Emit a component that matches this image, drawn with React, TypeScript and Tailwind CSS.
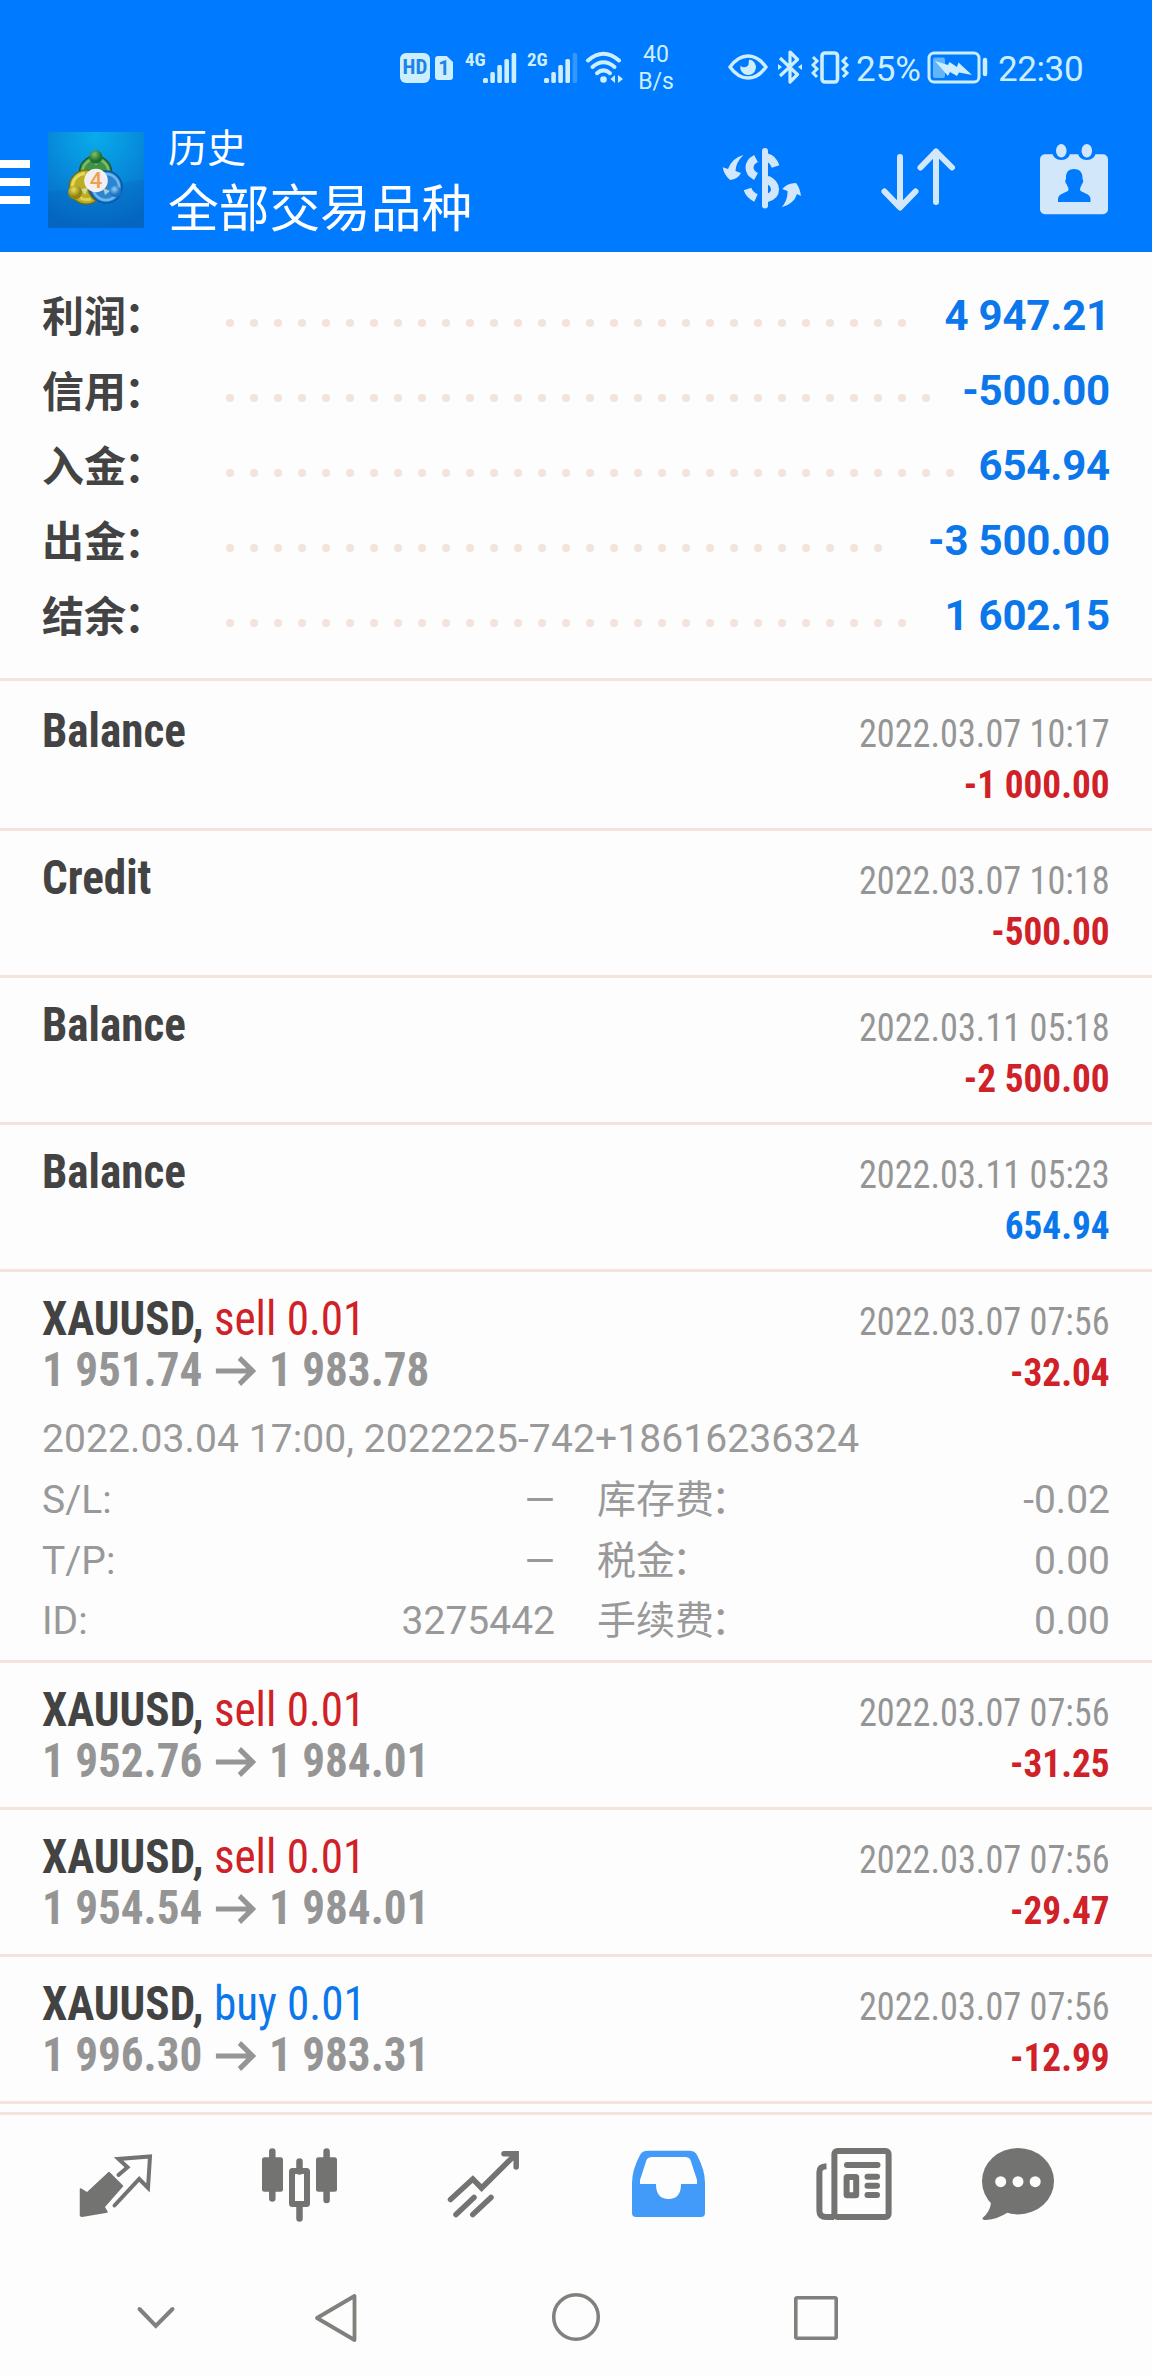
import clsx from 'clsx'

type Tone = 'red' | 'blue'

const TONE_MAP: Record<Tone, string> = {
  red: 'text-[#cf2127]',
  blue: 'text-[#0b77ea]',
}

const SUMMARY = [
  { label: '利润', value: '4 947.21', dots: 29 },
  { label: '信用', value: '-500.00', dots: 30 },
  { label: '入金', value: '654.94', dots: 31 },
  { label: '出金', value: '-3 500.00', dots: 28 },
  { label: '结余', value: '1 602.15', dots: 29 },
]

interface Deal {
  title: string
  side?: string
  sideTone?: Tone
  from?: string
  to?: string
  time: string
  amount: string
  tone: Tone
  expanded?: boolean
}

const DEALS: Deal[] = [
  { title: 'Balance', time: '2022.03.07 10:17', amount: '-1 000.00', tone: 'red' },
  { title: 'Credit', time: '2022.03.07 10:18', amount: '-500.00', tone: 'red' },
  { title: 'Balance', time: '2022.03.11 05:18', amount: '-2 500.00', tone: 'red' },
  { title: 'Balance', time: '2022.03.11 05:23', amount: '654.94', tone: 'blue' },
  {
    title: 'XAUUSD,',
    side: 'sell 0.01',
    sideTone: 'red',
    from: '1 951.74',
    to: '1 983.78',
    time: '2022.03.07 07:56',
    amount: '-32.04',
    tone: 'red',
    expanded: true,
  },
  {
    title: 'XAUUSD,',
    side: 'sell 0.01',
    sideTone: 'red',
    from: '1 952.76',
    to: '1 984.01',
    time: '2022.03.07 07:56',
    amount: '-31.25',
    tone: 'red',
  },
  {
    title: 'XAUUSD,',
    side: 'sell 0.01',
    sideTone: 'red',
    from: '1 954.54',
    to: '1 984.01',
    time: '2022.03.07 07:56',
    amount: '-29.47',
    tone: 'red',
  },
  {
    title: 'XAUUSD,',
    side: 'buy 0.01',
    sideTone: 'blue',
    from: '1 996.30',
    to: '1 983.31',
    time: '2022.03.07 07:56',
    amount: '-12.99',
    tone: 'red',
  },
]

const DETAILS = [
  ['S/L:', '—', '库存费', '-0.02'],
  ['T/P:', '—', '税金', '0.00'],
  ['ID:', '3275442', '手续费', '0.00'],
]

const SignalBars = ({ weak = false }: { weak?: boolean }) => (
  <svg width="36" height="34" viewBox="0 0 36 34" fill="currentColor">
    <rect x="1" y="28" width="5" height="5" rx="1.5" />
    <rect x="8.3" y="22" width="4.6" height="11" rx="1.5" />
    <rect x="15.3" y="15" width="4.6" height="18" rx="1.5" />
    <rect x="22.4" y="9" width="4.6" height="24" rx="1.5" />
    <rect x="29.6" y="3" width="4.6" height="30" rx="1.5" opacity={weak ? 0.25 : 1} />
  </svg>
)

const StatusBar = () => (
  <div className="flex h-[110px] items-start pl-[400px] pt-[50px] text-[#cdeefd]">
    <div className="mt-[3px] flex h-[30px] w-[30px] items-center justify-center rounded-[6px] bg-[#cdeefd] text-[21px] font-bold text-[#1c84e8] [font-stretch:75%]">
      HD
    </div>
    <div className="ml-[5px] mt-[6px] flex h-6 w-[18px] items-center justify-center rounded-[3px] bg-[#cdeefd] text-[20px] font-bold text-[#1c84e8] [clip-path:polygon(0_0,65%_0,100%_25%,100%_100%,0_100%)]">
      1
    </div>
    <span className="ml-[12px] mt-0 w-[17px] text-[19px] leading-[19px] font-bold [font-stretch:75%]">4G</span>
    <SignalBars />
    <span className="ml-[9px] mt-0 w-[16px] text-[19px] leading-[19px] font-bold [font-stretch:75%]">2G</span>
    <SignalBars weak />
    <svg className="ml-[6px]" width="40" height="34" viewBox="0 0 40 34" fill="none" stroke="currentColor" strokeWidth="4" strokeLinecap="round">
      <path d="M3 10.5Q18.500-3 34 10.500" />
      <path d="M7.500 17Q18.500 7.500 29.500 17" />
      <path d="M12 23.200Q18.500 17.500 25 23.200" />
      <circle cx="18.500" cy="29.500" r="3.300" fill="currentColor" stroke="none" />
      <path d="M30 25v8l-4.500-4zM33 25v8l5-4z" fill="currentColor" stroke="none" />
    </svg>
    <div className="-mt-[9px] ml-[11px] w-[40px] text-center text-[23px] leading-[27px]">
      40
      <br />
      B/s
    </div>
    <svg className="ml-[51px]" width="42" height="34" viewBox="0 0 42 34" fill="none" stroke="currentColor" strokeWidth="3.500">
      <path d="M3 17Q11 6 21 6T39 17Q31 28 21 28T3 17Z" strokeLinejoin="round" />
      <path d="M22.500 9.500a7.800 7.800 0 1 1-9 6c2 3 7 2 8-1 .5-2-.2-4 1-5z" fill="currentColor" stroke="none" />
    </svg>
    <svg className="ml-[8px]" width="28" height="34" viewBox="0 0 28 34" fill="none" stroke="currentColor" strokeWidth="3.200" strokeLinejoin="round">
      <path d="M3 8 20.500 24.500 13 32V2l7.500 7.500L3 26" />
      <path d="M1 14v6l4-3zM25 14v6l-4-3z" fill="currentColor" stroke="none" />
    </svg>
    <svg className="ml-[6px]" width="40" height="34" viewBox="0 0 40 34" fill="none" stroke="currentColor">
      <rect x="11" y="3" width="15.500" height="29" rx="3" strokeWidth="3.600" />
      <path d="m2 7 4 4-4 4 4 4-4 4 4 4M36 7l-4 4 4 4-4 4 4 4-4 4" strokeWidth="3" />
    </svg>
    <span className="ml-[5px] w-[71px] text-[35px] leading-[40px]">25%</span>
    <svg width="64" height="34" viewBox="0 0 64 34" fill="none">
      <rect x="2" y="3" width="50" height="29" rx="5" stroke="currentColor" strokeWidth="3" />
      <rect x="6" y="7.500" width="12" height="20.500" rx="2" fill="#62b4fb" />
      <path d="M8 11 21 15 22.500 12 30 17 31.500 12.500 45 25 32 22.500 30 26 23 22 21 26Z" fill="currentColor" />
      <path d="M58 10v14" stroke="currentColor" strokeWidth="4.500" strokeLinecap="round" />
    </svg>
    <span className="ml-[7px] text-[35px] leading-[40px] tracking-[-0.4px]">22:30</span>
  </div>
)

const Logo = () => (
  <svg width="96" height="96" viewBox="0 0 96 96">
    <defs>
      <radialGradient id="sky" cx="50%" cy="5%" r="95%">
        <stop offset="0" stopColor="#08aceb" />
        <stop offset="0.550" stopColor="#0787d8" />
        <stop offset="1" stopColor="#0568c4" />
      </radialGradient>
      <radialGradient id="green" cx="40%" cy="30%">
        <stop offset="0" stopColor="#7cc26a" />
        <stop offset="1" stopColor="#1f7030" />
      </radialGradient>
      <radialGradient id="yellow" cx="40%" cy="30%">
        <stop offset="0" stopColor="#ece05a" />
        <stop offset="1" stopColor="#8f8412" />
      </radialGradient>
      <radialGradient id="azure" cx="40%" cy="30%">
        <stop offset="0" stopColor="#8dd0fa" />
        <stop offset="1" stopColor="#1c72c4" />
      </radialGradient>
    </defs>
    <rect width="96" height="96" rx="2" fill="url(#sky)" />
    <path d="M0 60 96 48V96H0Z" fill="#0560b8" opacity="0.250" />
    <circle cx="47.500" cy="40" r="16" fill="#3f9246" stroke="#1b5b33" strokeWidth="1.500" />
    <circle cx="47.500" cy="40" r="13" fill="none" stroke="#79bd68" strokeWidth="2.500" />
    <circle cx="58" cy="55" r="16" fill="#2b85d3" stroke="#0f559f" strokeWidth="1.500" />
    <circle cx="58" cy="55" r="13" fill="none" stroke="#6db9ef" strokeWidth="2.500" />
    <path d="M42 38.500A17 17 0 1 0 48 69Q39 62 40 54Z" fill="#b9ae25" stroke="#6d6a18" strokeWidth="1.200" />
    <path d="M37 41.500A13 13 0 0 0 24.500 54" fill="none" stroke="#e6da58" strokeWidth="3" />
    <path d="M30 64Q35 69 43 67" fill="none" stroke="#e0d14c" strokeWidth="3" />
    <path d="M48 33 43 28.500H53ZM33 57 37 63 40 56ZM62 59 57 63 55 56Z" fill="#d9eecb" opacity="0.700" />
    <circle cx="47.800" cy="25" r="6.700" fill="url(#green)" />
    <circle cx="27" cy="60.500" r="7" fill="url(#yellow)" />
    <circle cx="67.500" cy="59.500" r="5.800" fill="url(#azure)" />
    <circle cx="48" cy="48.500" r="11.800" fill="#f3eef0" />
    <text x="48" y="56" textAnchor="middle" fontSize="22" fontWeight="500" fill="#f0a04a">
      4
    </text>
  </svg>
)

const Header = () => (
  <header className="h-[252px] bg-[#007aff]">
    <StatusBar />
    <div className="flex h-[142px] items-start text-[#d2e7fa]">
      <div className="mt-[50px] flex w-[30px] flex-col gap-[10px]">
        <i className="h-2 bg-white" />
        <i className="h-2 bg-white" />
        <i className="h-2 bg-white" />
      </div>
      <div className="ml-[18px] mt-[22px]">
        <Logo />
      </div>
      <div className="ml-[24px] mt-[12px] w-[552px] text-white">
        <div className="text-[39px] leading-[54px]">历史</div>
        <div className="text-[50.7px] leading-[68px]">全部交易品种</div>
      </div>
      <svg className="mt-[35px]" width="84" height="70" viewBox="0 0 84 70" fill="none" stroke="currentColor" strokeWidth="8">
        <path d="M45 6v54.500" strokeWidth="6" strokeLinecap="round" />
        <path d="M36 13.500Q29.500 17 29.500 22.500T36 31.500" />
        <path d="M27.500 44Q29.500 50 36 53" strokeLinecap="butt" />
        <path d="M47 12.500Q53 14 55.500 21.500" />
        <path d="M47 34.500Q55 38 55 44.500T47 53" />
        <path
          d="M2.700 22.300 8 24Q12 13 23.500 10Q16 17 15.500 26L21 28Q18 34 10 35Q4 30 2.700 22.300ZM61.700 62.300Q68 55 67.500 46L62.300 44Q67 38 76 38Q80 43 81 51L77 49Q74 59 61.700 62.300Z"
          fill="currentColor"
          stroke="none"
        />
      </svg>
      <svg className="ml-[76px] mt-[35px]" width="78" height="70" viewBox="0 0 78 70" fill="none" stroke="currentColor" strokeWidth="6" strokeLinecap="round" strokeLinejoin="round">
        <path d="M20 12v50M4.500 46.500 20 62.500 35.500 46.500M56 57V6.500M40.500 22.500 56 6.500 72 22.500" />
      </svg>
      <svg className="ml-[80px] mt-[30px]" width="74" height="78" viewBox="0 0 74 78" fill="currentColor">
        <rect x="2" y="14.300" width="68" height="60" rx="5" />
        <g fill="#007aff">
          <path d="M14 10h18.500v2q-1.500 8-9.200 8T14 12zM39.500 10H58v2q-1.500 8-9.200 8t-9.300-8z" />
          <path d="M36 29c6 0 9 4 8.500 10 .5 0 1.500 3-.5 5-1 3-2 3-2 6 1 3 10.500 3 10.500 9v3h-32.500v-3c0-6 9.500-6 10.500-9 0-3-1-3-2-6-2-2-1-5-.5-5-.5-6 2-10 8-10z" />
        </g>
        <ellipse cx="23.300" cy="10.700" rx="5.300" ry="6.700" />
        <ellipse cx="48.800" cy="10.700" rx="5.300" ry="6.700" />
      </svg>
    </div>
  </header>
)

const DealRow = ({ deal }: { deal: Deal }) => (
  <section className={clsx('border-b-3 border-[#f3e3da] px-[42px]', deal.expanded ? 'h-[391px]' : 'h-[147px]')}>
    <div className="flex h-[123px] justify-between [font-stretch:75%]">
      <div className="origin-left scale-x-[0.94] pt-[21px] text-[48px] leading-[51px]">
        <div>
          <span className="font-bold text-[#434343]">{deal.title}</span>
          {deal.side && <span className={TONE_MAP[deal.sideTone!]}> {deal.side}</span>}
        </div>
        {deal.from && (
          <div className="flex font-bold text-[#959595]">
            <span>{deal.from}</span>
            <svg className="mx-[13px] mt-[6px]" width="45" height="40" viewBox="0 0 45 40" fill="none" stroke="currentColor" strokeWidth="5.200">
              <path d="M1 21h40M26 8l14 13-14 13" />
            </svg>
            <span>{deal.to}</span>
          </div>
        )}
      </div>
      <div className="pt-[25px] text-right text-[39px] leading-[51px]">
        <div className="origin-right scale-x-[0.93] text-[#959595]">{deal.time}</div>
        <div className={clsx('origin-right scale-x-[0.955] font-bold', TONE_MAP[deal.tone])}>{deal.amount}</div>
      </div>
    </div>
    {deal.expanded && (
      <div className="pt-[14px] text-[39px] text-[#999]">
        <div className="leading-[60px] tracking-[0.1px]">2022.03.04 17:00, 2022225-742+18616236324</div>
        <div className="pt-px">
          {DETAILS.map(([name, value, feeName, fee]) => (
            <div key={name} className="flex leading-[60.5px]">
              <span className="flex w-[513px] justify-between">
                <span>{name}</span>
                <span>{value}</span>
              </span>
              <span className="ml-[42px] flex-1">
                {feeName}
                <span className="-ml-[3px]">：</span>
              </span>
              <span>{fee}</span>
            </div>
          ))}
        </div>
      </div>
    )}
  </section>
)

const TabBar = () => (
  <nav className="mt-2 flex h-[144px] border-t-3 border-[#f3e3da] pl-6 pt-[30px] text-[#737371]">
    <div className="flex w-[184px] justify-center">
      <svg width="80" height="80" viewBox="0 0 80 80" fill="none" stroke="currentColor">
        <path d="M4.500 44 11 48 33 27.500 46.500 41 28 62 31 67 6 71.300 4.500 70.500Z" fill="currentColor" strokeWidth="1.500" strokeLinejoin="round" />
        <path d="M42.500 30 51.500 22.300 42.500 14 74 11.500 72 43 63.200 34 38.500 60.500" strokeWidth="4" strokeLinecap="round" />
      </svg>
    </div>
    <div className="flex w-[184px] justify-center">
      <svg width="80" height="80" viewBox="0 0 80 80" fill="none" stroke="currentColor" strokeWidth="6.500" strokeLinecap="round">
        <path d="M12.300 6.500v47M39.500 16.500v10M39.500 60v13.500M66.600 6.500v48.500" />
        <rect x="2" y="12.300" width="21" height="34.400" rx="2.500" fill="currentColor" stroke="none" />
        <rect x="56" y="12.300" width="21" height="34.400" rx="2.500" fill="currentColor" stroke="none" />
        <rect x="32" y="26" width="15" height="33" rx="0.500" strokeWidth="6" />
      </svg>
    </div>
    <div className="flex w-[184px] justify-center">
      <svg width="80" height="80" viewBox="0 0 80 80" fill="none" stroke="currentColor" strokeWidth="5.500" strokeLinecap="round">
        <path d="M6.500 54.500 28.800 34 37.600 43 71 10M60 8.800H72.200V22" />
        <path d="M12 69.500 30 52.500M28.800 69.500 47 52.500" />
      </svg>
    </div>
    <div className="flex w-[184px] justify-center text-[#429bf8]">
      <svg width="80" height="80" viewBox="0 0 80 80" fill="currentColor" fillRule="evenodd">
        <path d="M20 5.700H61Q67 5.700 69 10Q77 25 77 38V68Q77 72 73 72H8Q4 72 4 68V38Q4 25 12 10Q14 5.700 20 5.700ZM24 12Q20 12 18.500 15L12 35V39H28Q28 54 40.500 54T53 39H69V35L62.500 15Q61 12 57 12Z" />
      </svg>
    </div>
    <div className="flex w-[184px] justify-center">
      <svg width="80" height="80" viewBox="0 0 80 80" fill="none" stroke="currentColor" strokeWidth="6">
        <rect x="22.400" y="6" width="54.200" height="66" rx="3" />
        <path d="M22 72H14Q7.400 72 7.400 66V27Q7.400 21.500 14.500 21.300" />
        <path d="M35 20h30.500M55.500 31.800H65M55.500 40.800H65M55.500 50H65" strokeLinecap="round" />
        <rect x="34.600" y="32" width="9.600" height="18.200" rx="0.500" />
      </svg>
    </div>
    <div className="flex w-[148px] justify-center">
      <svg width="80" height="80" viewBox="0 0 80 80" fill="currentColor">
        <ellipse cx="40" cy="36.200" rx="36" ry="33.200" />
        <path d="M8 50 13 58Q12 67 4.500 73Q4 75 8 75Q20 74 29.600 67.500L36 60Z" />
        <g fill="#fdfdfd">
          <circle cx="22.700" cy="36.700" r="5.500" />
          <circle cx="40" cy="36.700" r="5.500" />
          <circle cx="57.200" cy="36.700" r="5.500" />
        </g>
      </svg>
    </div>
  </nav>
)

const SystemNav = () => (
  <div className="flex pl-[126px] pt-8 text-[#80807d]">
    <svg width="60" height="60" viewBox="0 0 60 60" fill="none" stroke="currentColor" strokeWidth="4" strokeLinecap="round">
      <path d="M13.500 21 29.800 38 46.500 21" />
    </svg>
    <svg className="ml-[120px]" width="60" height="60" viewBox="0 0 60 60" fill="none" stroke="currentColor" strokeWidth="3.800" strokeLinejoin="round">
      <path d="M11 30 48.500 8V52Z" />
    </svg>
    <svg className="ml-[180px]" width="60" height="60" viewBox="0 0 60 60" fill="none" stroke="currentColor" strokeWidth="3.500">
      <circle cx="30" cy="29" r="22.300" />
    </svg>
    <svg className="ml-[180px]" width="60" height="60" viewBox="0 0 60 60" fill="none" stroke="currentColor" strokeWidth="3.600">
      <rect x="9.800" y="9.800" width="40.400" height="40.400" rx="1.500" />
    </svg>
  </div>
)

const App = () => {
  return (
    <div className="h-[2376px] w-[1152px] overflow-hidden bg-[#fdfdfd] font-['Roboto','Noto_Sans_CJK_SC',sans-serif]">
      <Header />
      <div className="mb-[3px] h-[429px] border-b-3 border-[#f3e3da] px-[42px] pt-[26px]">
        {SUMMARY.map(({ label, value, dots }) => (
          <div key={label} className="flex h-[75px] items-center text-[42px] leading-[75px] font-bold">
            <span className="w-[184px] pt-[3px] text-[#434343]">
              {label}
              <span className="-ml-[2px]">：</span>
            </span>
            <span className="mt-[15px] flex flex-1 gap-4">
              {Array.from({ length: dots }, (_, i) => (
                <i key={i} className="size-2 shrink-0 rounded-full bg-[#f3e3da]" />
              ))}
            </span>
            <span className="tracking-[-0.2px] text-[#0b77ea]">{value}</span>
          </div>
        ))}
      </div>
      {DEALS.map((deal, i) => (
        <DealRow key={i} deal={deal} />
      ))}
      <TabBar />
      <SystemNav />
    </div>
  )
}

export default App
